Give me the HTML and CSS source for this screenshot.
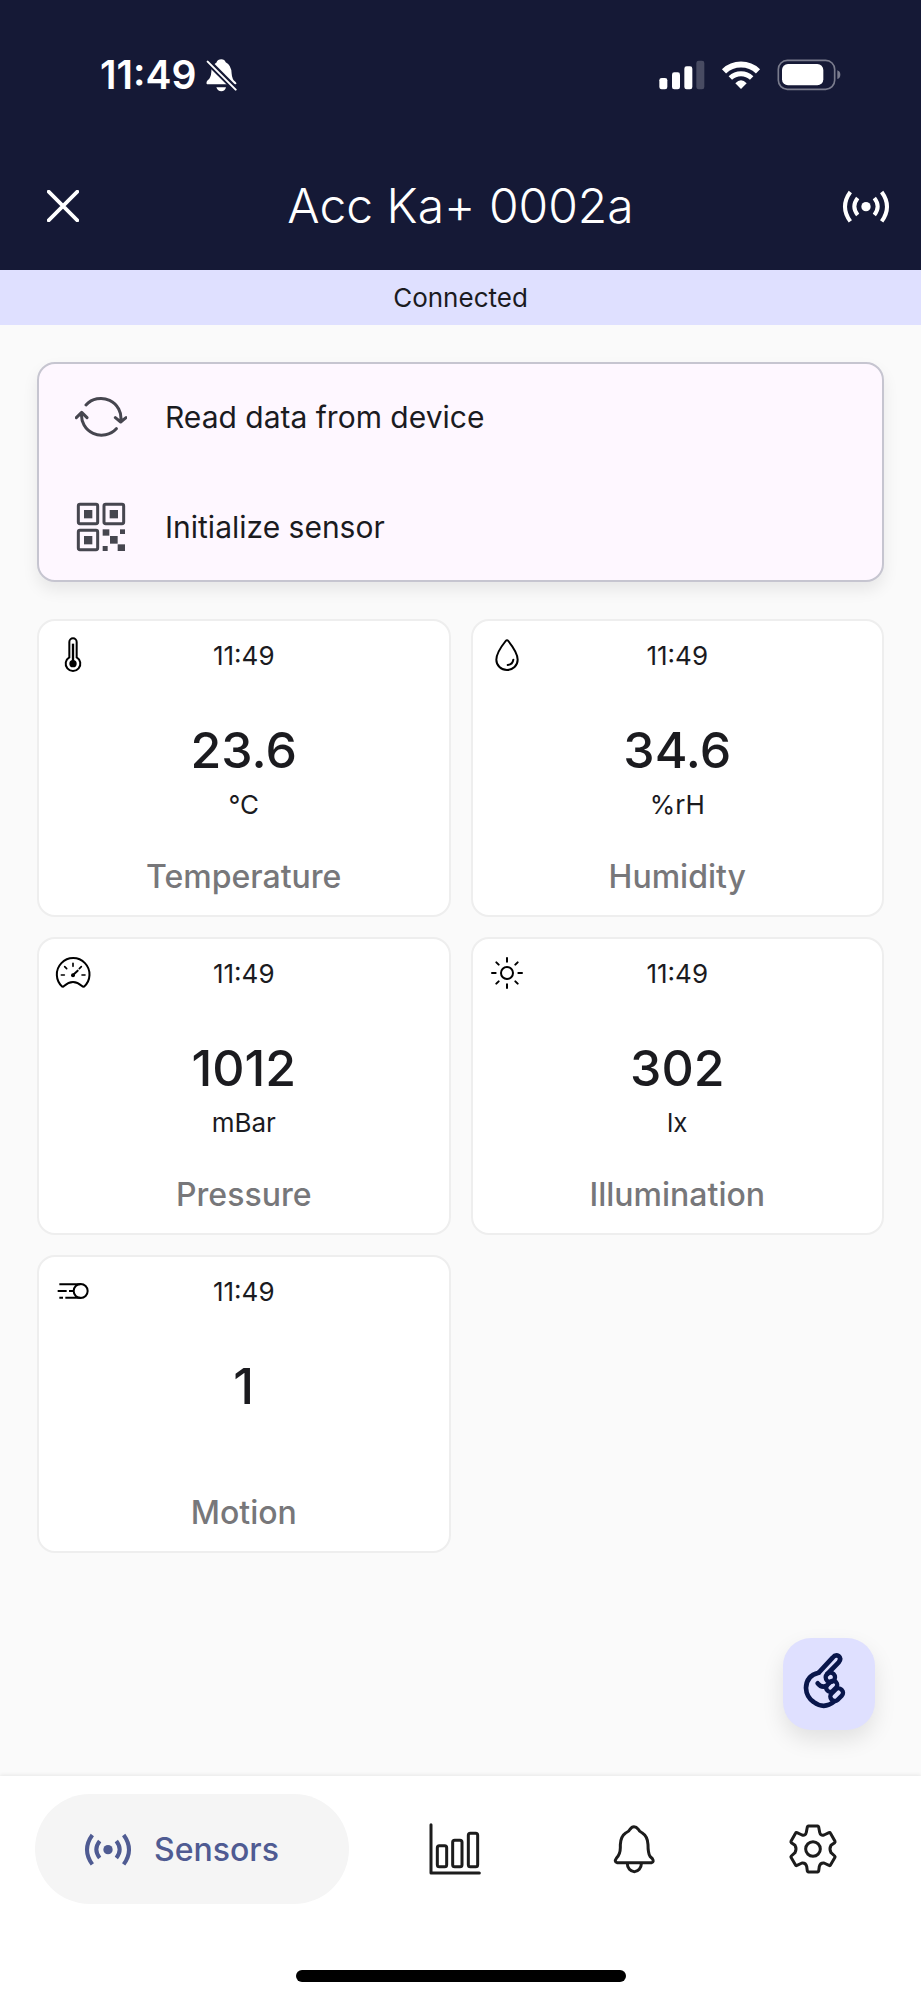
FILE: index.html
```html
<!DOCTYPE html>
<html lang="en">
<head>
<meta charset="utf-8">
<meta name="viewport" content="width=device-width, initial-scale=1">
<title>Acc Ka+ 0002a</title>
<link rel="stylesheet" href="styles.css">
</head>
<body>
<svg class="sprite" aria-hidden="true">
  <symbol id="antenna" viewBox="1146 568 144 99">
    <circle cx="1218" cy="618" r="14" fill="currentColor"/>
    <g fill="none" stroke="currentColor" stroke-width="12">
      <path d="M1171 574Q1139 618 1171 662M1193 592Q1173 618 1193 643M1243 592Q1263 618 1243 643M1265 574Q1297 618 1265 662"/>
    </g>
  </symbol>
</svg>

<header class="top">
  <div class="status">
    <div class="status-group status-left">
      <span class="clock">11:49</span>
      <svg width="31" height="33" viewBox="619 176 93 99" aria-hidden="true">
        <path fill="#fff" d="M665 177q10 0 13 9 17 8 18 34 1 17 11 24 6 6 1 8H622q-4-5 2-12 10-8 11-26 0-20 15-27 4-10 15-10zM650 261h29q-3 12-14 12t-15-12z"/>
        <path stroke="#151936" stroke-width="18" d="M622 181l90 90"/>
        <path stroke="#fff" stroke-width="6" stroke-linecap="round" d="M624 184l84 84"/>
      </svg>
    </div>
    <div class="status-group status-right">
      <svg width="46" height="30" viewBox="599 179 138 90" aria-hidden="true">
        <g fill="#fff">
          <rect x="600" y="233" width="24" height="34" rx="7"/>
          <rect x="638" y="216" width="24" height="51" rx="7"/>
          <rect x="675" y="198" width="24" height="69" rx="7"/>
          <rect x="711" y="181" width="24" height="86" rx="7" opacity=".22"/>
        </g>
      </svg>
      <svg width="40" height="30" viewBox="783 179 120 90" aria-hidden="true">
        <g fill="none" stroke="#fff">
          <path stroke-width="18" d="M792 213a74 74 0 0 1 102 0"/>
          <path stroke-width="15" d="M811 233a47 47 0 0 1 64 0"/>
        </g>
        <path fill="#fff" d="M843 266l-17-17q17-18 34 0z"/>
      </svg>
      <svg width="64" height="32" viewBox="950 176 192 96" aria-hidden="true">
        <rect x="954" y="180" width="169" height="87" rx="27" fill="none" stroke="#7a7c8d" stroke-width="5"/>
        <rect x="965" y="191" width="124" height="64" rx="18" fill="#fff"/>
        <path fill="#7a7c8d" d="M1131 210q9 3 9 13t-9 13z"/>
      </svg>
    </div>
  </div>
  <div class="bar">
    <button class="icon-button" type="button" aria-label="Close">
      <svg width="32" height="32" viewBox="145 570 96 96"><path d="M150 575l86 86M236 575l-86 86" stroke="currentColor" stroke-width="11" stroke-linecap="round"/></svg>
    </button>
    <h1 class="title">Acc Ka+ 0002a</h1>
    <button class="icon-button" type="button" aria-label="Connection">
      <svg width="48" height="33"><use href="#antenna"/></svg>
    </button>
  </div>
</header>

<p class="banner" role="status">Connected</p>

<main class="content">
  <div class="actions">
    <button class="action" type="button">
      <svg width="52" height="48" viewBox="224 157 156 144" aria-hidden="true">
        <g fill="none" stroke="currentColor" stroke-width="9" stroke-linecap="round" stroke-linejoin="round">
          <path d="M257 193A60 59 0 0 1 361 242M345 231l16 13 16-13M348 264A60 59 0 0 1 244 217M228 231l16-16 16 16"/>
        </g>
      </svg>
      <span>Read data from device</span>
    </button>
    <button class="action" type="button">
      <svg width="52" height="52" viewBox="225 481 156 156" aria-hidden="true">
        <g fill="none" stroke="currentColor" stroke-width="9">
          <rect x="235" y="491" width="58" height="58" rx="5"/>
          <rect x="312" y="491" width="59" height="58" rx="5"/>
          <rect x="235" y="569" width="58" height="58" rx="5"/>
        </g>
        <g fill="currentColor">
          <rect x="252" y="508" width="25" height="25"/>
          <rect x="329" y="508" width="25" height="25"/>
          <rect x="252" y="586" width="25" height="25"/>
          <rect x="308" y="566" width="20" height="19"/>
          <rect x="360" y="566" width="15" height="14"/>
          <rect x="330" y="586" width="23" height="23"/>
          <rect x="353" y="611" width="22" height="20"/>
          <rect x="308" y="616" width="15" height="15"/>
        </g>
      </svg>
      <span>Initialize sensor</span>
    </button>
  </div>

  <section class="grid" aria-label="Sensor readings">
    <article class="card">
      <div class="card-head">
        <svg width="36" height="36" viewBox="166 110 108 108" aria-hidden="true">
          <path d="M209 171V125a11 11 0 0 1 22 0V171A22 22 0 1 1 209 171Z" fill="none" stroke="#000" stroke-width="6"/>
          <path d="M220 130v60" stroke="#000" stroke-width="7"/>
          <circle cx="220" cy="190" r="11"/>
        </svg>
        <time>11:49</time>
      </div>
      <p class="value">23.6</p>
      <p class="unit">°C</p>
      <h2 class="name">Temperature</h2>
    </article>
    <article class="card">
      <div class="card-head">
        <svg width="36" height="36" viewBox="85 110 108 108" aria-hidden="true">
          <g fill="none" stroke="#000" stroke-width="6" stroke-linecap="round">
            <path d="M135 122Q139 117 143 122 171 157 171 178A32 31 0 0 1 107 178Q107 157 135 122Z"/>
            <path d="M158 178Q156 193 141 194"/>
          </g>
        </svg>
        <time>11:49</time>
      </div>
      <p class="value">34.6</p>
      <p class="unit">%rH</p>
      <h2 class="name">Humidity</h2>
    </article>
    <article class="card">
      <div class="card-head">
        <svg width="36" height="36" viewBox="166 104 108 108" aria-hidden="true">
          <g fill="none" stroke="#000" stroke-width="6" stroke-linecap="round" stroke-linejoin="round">
            <path d="M188 199A49 49 0 1 1 253 199Q250 200 247 197 220 173 193 197 191 200 188 199Z"/>
            <path d="M185 164h9M247 164h9M220 129v9M195 139l6 6M245 139l-6 6" stroke-width="5"/>
            <path d="M220 164l14-13"/>
          </g>
          <circle cx="220" cy="165" r="6"/>
        </svg>
        <time>11:49</time>
      </div>
      <p class="value">1012</p>
      <p class="unit">mBar</p>
      <h2 class="name">Pressure</h2>
    </article>
    <article class="card">
      <div class="card-head">
        <svg width="36" height="36" viewBox="85 104 108 108" aria-hidden="true">
          <g fill="none" stroke="#000" stroke-width="6" stroke-linecap="round">
            <circle cx="139" cy="158" r="18"/>
            <path d="M139 113v11M139 192v11M94 158h11M173 158h11M107 126l7 7M164 183l7 7M171 126l-7 7M114 183l-7 7"/>
          </g>
        </svg>
        <time>11:49</time>
      </div>
      <p class="value">302</p>
      <p class="unit">lx</p>
      <h2 class="name">Illumination</h2>
    </article>
    <article class="card">
      <div class="card-head">
        <svg width="36" height="36" viewBox="166 100 108 108" aria-hidden="true">
          <g fill="none" stroke="#000" stroke-width="6">
            <circle cx="243" cy="154" r="21"/>
            <path d="M179 134h64M174 154h27M208 154h14M179 174h11M197 174h46"/>
          </g>
        </svg>
        <time>11:49</time>
      </div>
      <p class="value">1</p>
      <p class="unit"></p>
      <h2 class="name">Motion</h2>
    </article>
  </section>

  <button class="fab" type="button" aria-label="Identify sensor">
    <svg width="44" height="58" viewBox="190 158 132 174">
      <g fill="none" stroke="currentColor" stroke-width="14" stroke-linecap="round" stroke-linejoin="round">
        <path d="M238 219L279 175Q287 165 297 170 306 177 297 189L263 224"/>
        <path d="M237 220Q200 228 199 266 200 293 222 308 254 332 284 306"/>
        <path d="M234 252Q245 266 260 260"/>
        <circle cx="272" cy="234" r="14" stroke-width="13"/>
        <rect x="-18" y="-12" width="36" height="24" rx="11" transform="translate(276 261) rotate(-45)" stroke-width="13"/>
        <rect x="-21" y="-13" width="42" height="26" rx="12" transform="translate(291 286) rotate(-45)" stroke-width="13"/>
      </g>
    </svg>
  </button>
</main>

<nav class="nav" aria-label="Main">
  <div class="tabs">
    <a class="tab tab-active" href="#sensors" aria-current="page">
      <svg width="48" height="33" aria-hidden="true"><use href="#antenna"/></svg>
      <span>Sensors</span>
    </a>
    <a class="tab" href="#charts" aria-label="Charts">
      <svg width="54" height="54" viewBox="84 185 162 162">
        <g fill="none" stroke="currentColor" stroke-width="9" stroke-linecap="round" stroke-linejoin="round">
          <path d="M93 193V338H238"/>
          <rect x="112" y="256" width="28" height="63" rx="6"/>
          <rect x="158" y="240" width="28" height="79" rx="6"/>
          <rect x="205" y="219" width="28" height="100" rx="6"/>
        </g>
      </svg>
    </a>
    <a class="tab" href="#alerts" aria-label="Alerts">
      <svg width="54" height="54" viewBox="621 185 162 162">
        <g fill="none" stroke="currentColor" stroke-width="9" stroke-linecap="round" stroke-linejoin="round">
          <path d="M651 307Q642 304 649 294 661 281 661 262V253Q662 228 677 218 688 213 690 207 695 199 702 199 709 199 715 207 717 213 727 218 743 228 744 253 744 278 750 288L757 295Q763 304 755 307Z"/>
          <path d="M682 310a21 24 0 0 0 42 0"/>
        </g>
      </svg>
    </a>
    <a class="tab" href="#settings" aria-label="Settings">
      <svg width="54" height="54" viewBox="1159 185 162 162">
        <g fill="none" stroke="currentColor" stroke-width="9" stroke-linejoin="round">
          <path d="M1226 197H1254Q1256 197 1257 200L1260 216Q1262 227 1273 224L1288 217Q1291 216 1292 218L1306 243Q1307 245 1305 247L1294 255Q1288 266 1294 277L1305 287Q1307 289 1306 291L1292 315Q1291 317 1288 315L1273 308Q1262 307 1259 318L1257 332Q1256 335 1254 335H1226Q1224 335 1223 332L1221 318Q1218 307 1207 308L1192 315Q1189 317 1188 315L1174 291Q1173 289 1175 287L1186 277Q1192 266 1186 255L1175 247Q1173 245 1174 243L1188 218Q1189 216 1192 217L1207 224Q1218 227 1220 216L1223 200Q1224 197 1226 197Z"/>
          <circle cx="1240" cy="266" r="22"/>
        </g>
      </svg>
    </a>
  </div>
  <div class="home-indicator"></div>
</nav>
</body>
</html>
```

FILE: styles.css
```css
* {
  box-sizing: border-box;
}

body {
  margin: 0;
  min-height: 100vh;
  display: flex;
  flex-direction: column;
  background: #fafafa;
  color: #1b1b1f;
  font-family: Inter, "Liberation Sans", sans-serif;
}

h1,
h2,
p {
  margin: 0;
  font-weight: 400;
}

button {
  padding: 0;
  border: 0;
  background: none;
  color: inherit;
  font: inherit;
  cursor: pointer;
}

svg {
  display: block;
  flex: none;
}

.sprite {
  position: absolute;
  width: 0;
  height: 0;
}

.top {
  background: #151936;
  color: #fff;
}

.status {
  display: flex;
  justify-content: space-between;
  align-items: center;
  height: 150px;
  padding: 0 80px 0 100px;
}

.status-group {
  display: flex;
  align-items: center;
}

.status-left {
  gap: 10px;
}

.status-right {
  gap: 16px;
}

.clock {
  font-size: 39px;
  line-height: 44px;
  font-weight: 600;
}

.bar {
  display: grid;
  grid-template-columns: 48px 1fr 48px;
  align-items: center;
  height: 120px;
  padding: 0 31px 8px;
}

.bar .icon-button {
  display: flex;
  justify-content: center;
  align-items: center;
  height: 88px;
}

.bar .icon-button:first-child {
  justify-content: flex-end;
}

.title {
  text-align: center;
  font-size: 48px;
  line-height: 60px;
  font-weight: 350;
}

.banner {
  background: #dfe0ff;
  text-align: center;
  font-size: 26px;
  line-height: 55px;
}

.content {
  position: relative;
  flex: 1;
  padding: 37px 37px 140px;
}

.actions {
  display: grid;
  gap: 4px;
  margin-bottom: 37px;
  border: 2px solid #c6c5d0;
  border-radius: 18px;
  background: #fef7ff;
  box-shadow: 0 8px 16px rgba(0, 0, 0, 0.08);
}

.action {
  display: flex;
  align-items: center;
  gap: 38px;
  width: 100%;
  height: 106px;
  padding: 0 36px;
  font-size: 30px;
  line-height: 40px;
  text-align: left;
}

.action svg {
  color: #46464f;
}

.grid {
  display: grid;
  grid-template-columns: 1fr 1fr;
  gap: 20px;
}

.card {
  padding: 16px 16px 18px;
  border: 2px solid #eee;
  border-radius: 18px;
  background: #fff;
  text-align: center;
}

.card-head {
  display: grid;
  grid-template-columns: 36px 1fr 36px;
  align-items: center;
  height: 36px;
  margin-bottom: 45px;
  font-size: 26px;
}

.value {
  font-size: 50px;
  line-height: 64px;
  font-weight: 450;
}

.unit {
  height: 46px;
  margin-bottom: 29px;
  font-size: 26px;
  line-height: 46px;
}

.name {
  color: #77777a;
  font-size: 32px;
  line-height: 40px;
  font-weight: 450;
}

.fab {
  position: absolute;
  right: 46px;
  bottom: 46px;
  display: flex;
  justify-content: center;
  align-items: center;
  width: 92px;
  height: 92px;
  padding: 0 8px 6px 0;
  border-radius: 28px;
  background: #dfe0ff;
  color: #09164b;
  box-shadow: 0 10px 22px rgba(0, 0, 0, 0.1);
}

.nav {
  padding: 18px 0;
  background: #fff;
  box-shadow: 0 -1px 4px rgba(0, 0, 0, 0.08);
}

.tabs {
  display: flex;
  align-items: center;
  margin-bottom: 66px;
  padding: 0 18px 0 35px;
}

.tab {
  flex: 1;
  display: flex;
  justify-content: center;
  align-items: center;
  height: 110px;
  color: #1c1c1c;
  text-decoration: none;
}

.tab-active {
  flex: none;
  justify-content: flex-start;
  gap: 22px;
  width: 314px;
  margin-right: 16px;
  padding-left: 49px;
  border-radius: 55px;
  background: #f5f5f5;
  color: #4f5b92;
  font-size: 32px;
  font-weight: 550;
}

.home-indicator {
  width: 330px;
  height: 12px;
  margin: 0 auto;
  border-radius: 6px;
  background: #000;
}
```
